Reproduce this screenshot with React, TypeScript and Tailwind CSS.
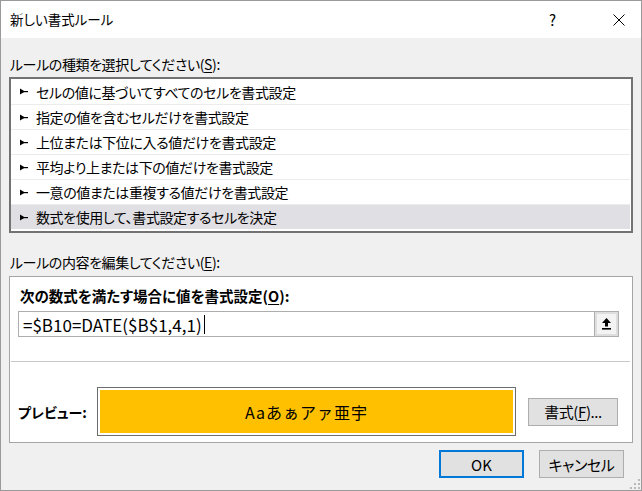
import React from "react";

const rules = [
  "セルの値に基づいてすべてのセルを書式設定",
  "指定の値を含むセルだけを書式設定",
  "上位または下位に入る値だけを書式設定",
  "平均より上または下の値だけを書式設定",
  "一意の値または重複する値だけを書式設定",
  "数式を使用して、書式設定するセルを決定",
];

function Pointer() {
  return (
    <svg width="8" height="7" viewBox="0 0 8 7" className="shrink-0">
      <polygon points="0,0.5 5,3.5 0,6.5" fill="#000" />
      <rect x="3" y="3" width="5" height="1.2" fill="#000" />
    </svg>
  );
}

function CollapseIcon() {
  return (
    <svg width="9" height="12" viewBox="0 0 9 12">
      <polygon points="4.5,0 9,5 6,5 6,8.5 3,8.5 3,5 0,5" fill="#000" />
      <rect x="0" y="10" width="9" height="1.6" fill="#000" />
    </svg>
  );
}

function Grip() {
  const dots = [
    [8, 0],
    [4, 4],
    [8, 4],
    [0, 8],
    [4, 8],
    [8, 8],
  ];
  return (
    <svg width="10" height="10" viewBox="0 0 10 10">
      {dots.map(([x, y]) => (
        <rect key={`${x}-${y}`} x={x} y={y} width="2" height="2" fill="#b9b9b9" />
      ))}
    </svg>
  );
}

export default function App() {
  const selected = 5;

  return (
    <div className="relative w-[642px] h-[491px] border border-[#9a9a9a] bg-[#f0f0f0] flex flex-col text-black font-['Noto_Sans_CJK_JP','Noto_Sans',sans-serif] [font-feature-settings:'palt'] overflow-hidden">
      {/* title bar */}
      <div className="h-[37px] bg-white flex items-center pl-[9px] shrink-0">
        <span className="text-[13.5px] leading-none">新しい書式ルール</span>
        <span className="ml-auto text-[15px] leading-none w-[10px] mr-[54px]">?</span>
        <svg width="12" height="12" viewBox="0 0 12 12" className="mr-[16px]">
          <path d="M0.5 0.5 L11.5 11.5 M11.5 0.5 L0.5 11.5" stroke="#000" strokeWidth="1" />
        </svg>
      </div>

      <div className="flex-1 flex flex-col px-[8px] text-[14px] tracking-[-0.4px]">
        <div className="mt-[16px] h-[20px] leading-[20px] pl-[1px]">
          ルールの種類を選択してください(<u className="underline-offset-2">S</u>):
        </div>

        {/* rule type list */}
        <div className="mt-[3px] h-[156px] border-2 border-[#737373] bg-white pb-[2px] pr-[1px] flex flex-col">
          {rules.map((r, i) => (
            <div
              key={r}
              className={`h-[25px] flex items-center gap-[8px] pl-[9px] ${
                i > 0 ? "border-t border-[#ececec]" : ""
              } ${i === selected ? "bg-[#e0dfe4]" : ""}`}
            >
              <Pointer />
              <span className="leading-none">{r}</span>
            </div>
          ))}
        </div>

        <div className="mt-[19px] h-[20px] leading-[20px] pl-[1px]">
          ルールの内容を編集してください(<u className="underline-offset-2">E</u>):
        </div>

        {/* rule description panel */}
        <div className="mt-[4px] h-[167px] border border-[#a5a5a5] bg-white flex flex-col">
          <div className="mt-[9px] h-[20px] leading-[20px] pl-[10px] text-[14.5px] tracking-normal font-bold">
            次の数式を満たす場合に値を書式設定(<u className="underline-offset-2">O</u>):
          </div>

          <div className="mt-[5px] ml-[8px] w-[601px] h-[26px] border border-[#adadad] flex">
            <div className="flex-1 flex items-center pl-[4px] text-[17px] tracking-normal leading-none [font-feature-settings:normal]">
              <span>=$B10=DATE($B$1,4,1)</span>
              <span className="ml-[2px] w-[1px] h-[19px] bg-black" />
            </div>
            <div className="w-[24px] border-l border-[#adadad] bg-[#dedede] p-[2px]">
              <div className="w-full h-full bg-[#f3f3f3] flex items-center justify-center">
                <CollapseIcon />
              </div>
            </div>
          </div>

          <div className="mt-[24px] ml-[1px] mr-[2px] h-[1px] bg-[#c8c8c8]" />

          <div className="mt-[25px] flex items-center pl-[8px]">
            <span className="w-[79px] font-bold tracking-normal leading-none">プレビュー:</span>
            <div className="w-[419px] h-[49px] border border-[#6d6d6d] bg-white p-[2px]">
              <div className="w-full h-full bg-[#ffc000] flex items-center justify-center text-[16px] tracking-[1px] [font-feature-settings:normal]">
                Aaあぁアァ亜宇
              </div>
            </div>
            <button className="ml-[12px] w-[90px] h-[28px] border border-[#adadad] bg-[#e1e1e1] text-[15px] leading-none">
              書式(<u className="underline-offset-2">F</u>)...
            </button>
          </div>
        </div>

        {/* dialog buttons */}
        <div className="mt-[7px] flex justify-end gap-[15px] pr-[9px]">
          <button className="w-[85px] h-[28px] border-2 border-[#0078d7] bg-[#e1e1e1] text-[15px] tracking-normal leading-none">
            OK
          </button>
          <button className="w-[85px] h-[28px] border border-[#adadad] bg-[#e1e1e1] text-[15px] leading-none">
            キャンセル
          </button>
        </div>
      </div>

      <div className="absolute right-[1px] bottom-[1px]">
        <Grip />
      </div>
    </div>
  );
}
